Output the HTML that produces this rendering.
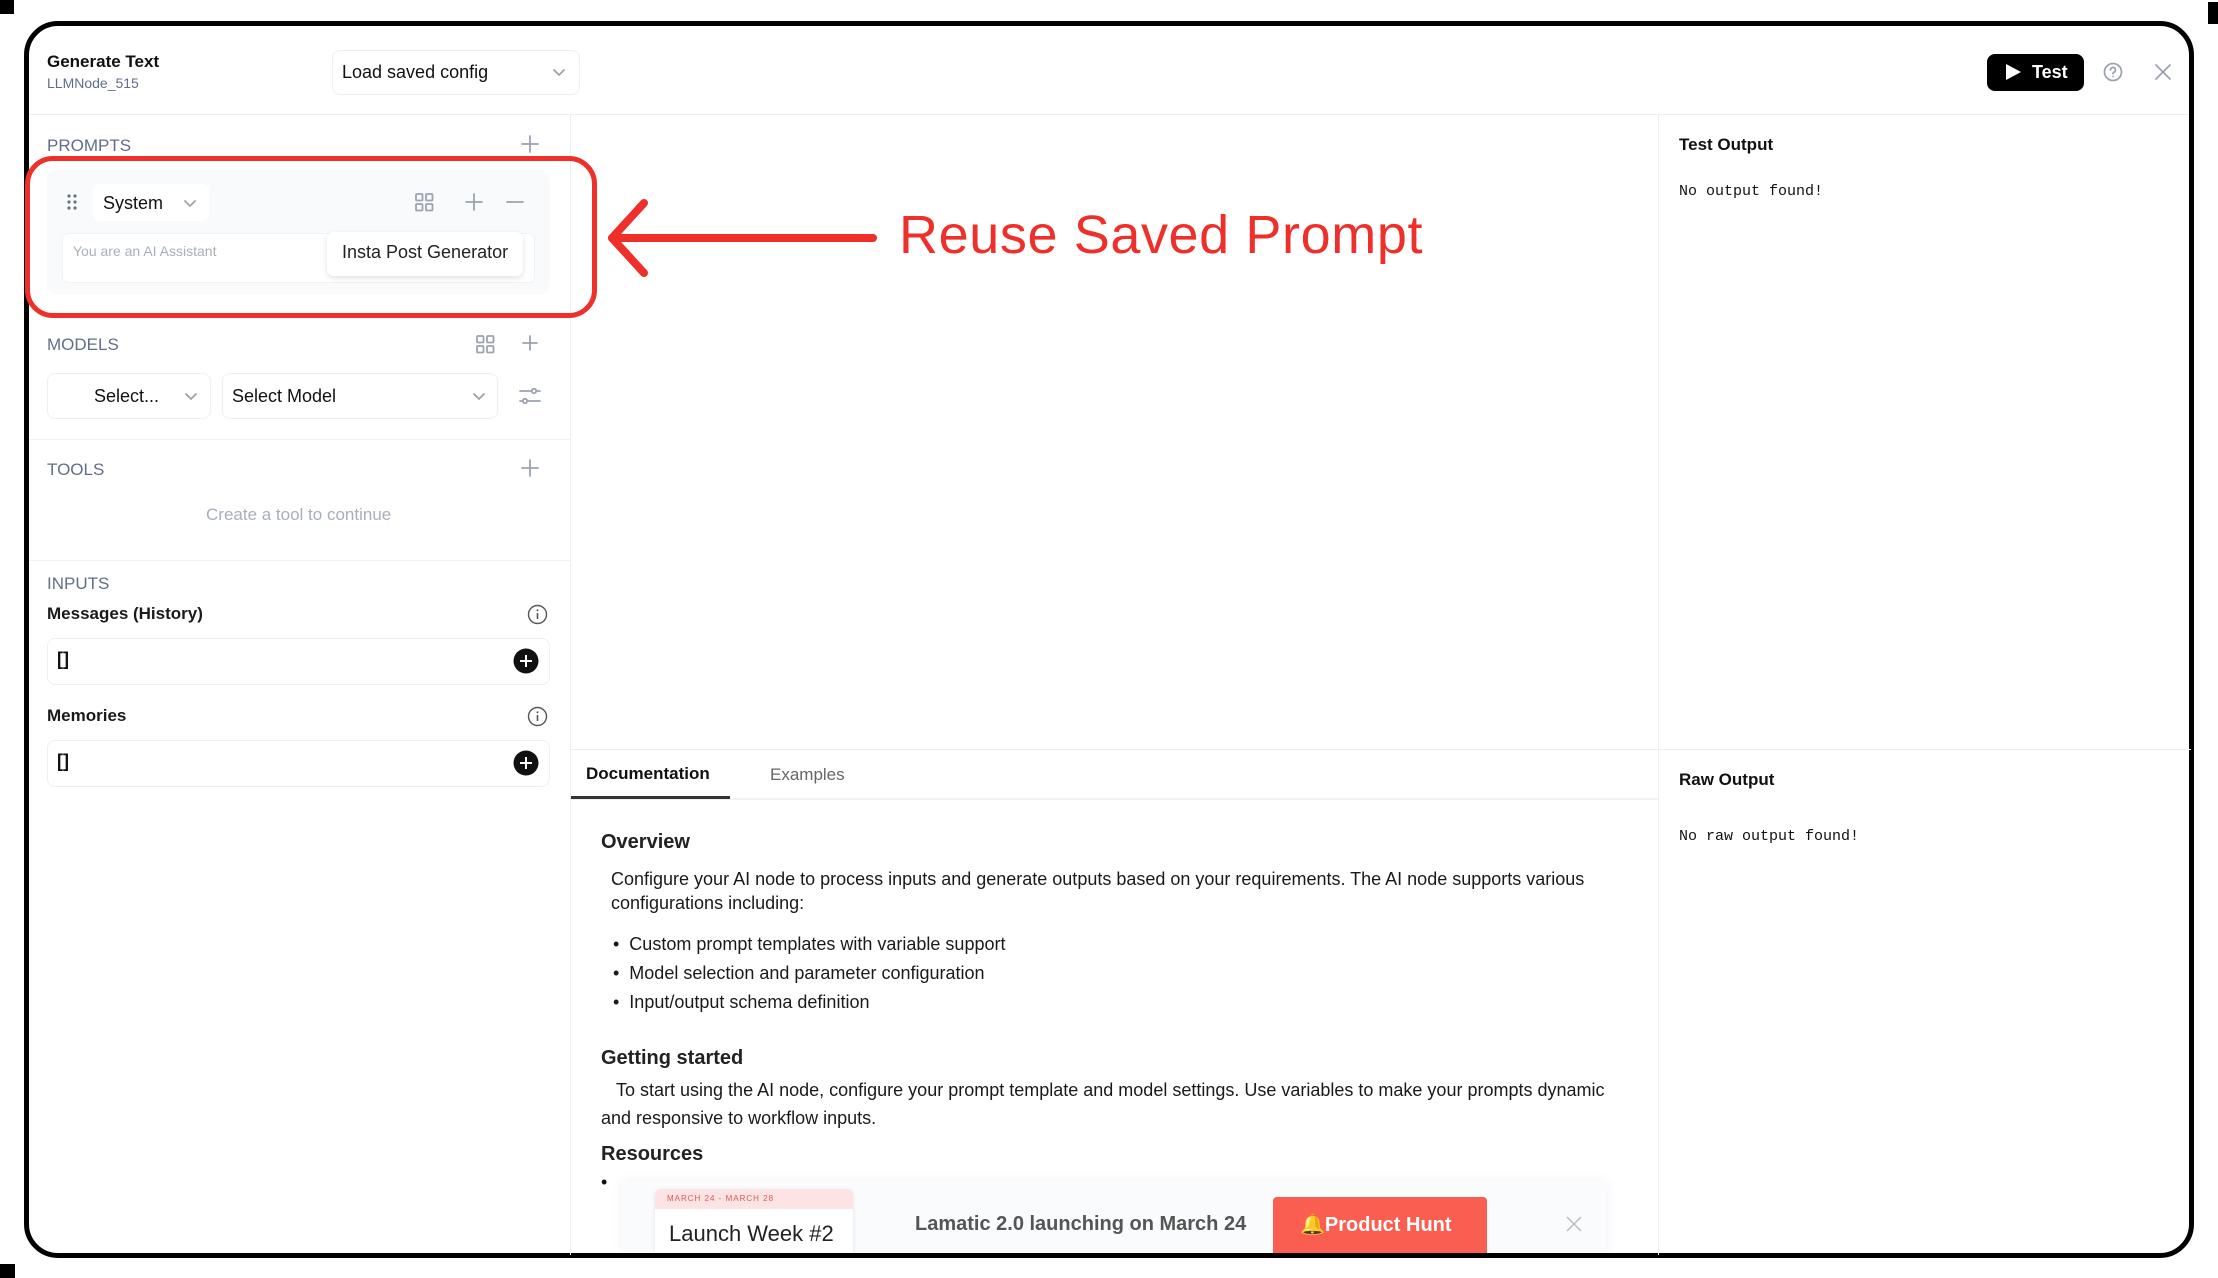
<!DOCTYPE html>
<html><head><meta charset="utf-8">
<style>
*{box-sizing:border-box;margin:0;padding:0}
body{width:2218px;height:1278px;background:#fff;position:relative;overflow:hidden;font-family:"Liberation Sans",sans-serif;color:#111}
.a{position:absolute}
.frame{left:24px;top:21px;width:2170px;height:1237px;border:5px solid #000;border-radius:34px;overflow:hidden;background:#fff}
.lbl{font-size:17px;color:#5f6f8a;font-weight:500}
.ic{stroke:#9ca3af;fill:none;stroke-width:1.8;stroke-linecap:round}
.box{border:1px solid #eef0f3;border-radius:8px;background:#fff}
.mono{font-family:"Liberation Mono",monospace;font-size:15px}
.doc{font-size:18px;color:#1a1a1a}
</style></head><body>
<div class="a" style="left:0;top:0;width:14px;height:14px;background:#000"></div>
<div class="a" style="left:0;top:1264px;width:15px;height:14px;background:#000"></div>
<div class="a" style="left:2208px;top:2px;width:10px;height:22px;background:#000"></div>
<div class="a frame"></div>

<!-- header -->
<div class="a" style="left:47px;top:52px;font-size:17px;font-weight:bold">Generate Text</div>
<div class="a" style="left:47px;top:75px;font-size:14px;color:#5f6f8a">LLMNode_515</div>
<div class="a box" style="left:332px;top:50px;width:248px;height:45px"></div>
<div class="a" style="left:342px;top:62px;font-size:18px">Load saved config</div>
<svg class="a" style="left:552px;top:65px" width="14" height="14"><path class="ic" d="M2 5l5 5 5-5"/></svg>
<div class="a" style="left:29px;top:114px;width:2160px;height:1px;background:#eef0f3"></div>
<div class="a" style="left:1987px;top:54px;width:97px;height:37px;background:#000;border-radius:8px"></div>
<svg class="a" style="left:2004px;top:63px" width="18" height="18"><path d="M2 1l15 8-15 8z" fill="#fff"/></svg>
<div class="a" style="left:2032px;top:62px;font-size:18px;color:#fff;font-weight:bold">Test</div>
<svg class="a" style="left:2103px;top:62px" width="20" height="20"><circle cx="10" cy="10" r="8.5" class="ic" stroke-width="1.5"/><path class="ic" stroke-width="1.5" d="M7.5 8a2.5 2.5 0 1 1 3.5 2.2c-.7.4-1 .8-1 1.6"/><circle cx="10" cy="14.5" r=".9" fill="#9ca3af"/></svg>
<svg class="a" style="left:2154px;top:63px" width="18" height="18"><path class="ic" d="M2 2l14 14M16 2L2 16"/></svg>

<!-- panel borders -->
<div class="a" style="left:570px;top:115px;width:1px;height:1140px;background:#eef0f3"></div>
<div class="a" style="left:1658px;top:115px;width:1px;height:1140px;background:#eef0f3"></div>
<div class="a" style="left:571px;top:749px;width:1620px;height:1px;background:#eef0f3"></div>

<!-- prompts -->
<div class="a lbl" style="left:47px;top:136px">PROMPTS</div>
<svg class="a" style="left:521px;top:135px" width="18" height="18"><path class="ic" d="M9 1v16M1 9h16"/></svg>
<div class="a" style="left:47px;top:170px;width:503px;height:124px;background:#f8fafc;border-radius:10px"></div>
<svg class="a" style="left:67px;top:194px" width="10" height="18"><g fill="#6b7280"><circle cx="2" cy="2" r="1.6"/><circle cx="8" cy="2" r="1.6"/><circle cx="2" cy="8" r="1.6"/><circle cx="8" cy="8" r="1.6"/><circle cx="2" cy="14" r="1.6"/><circle cx="8" cy="14" r="1.6"/></g></svg>
<div class="a" style="left:93px;top:184px;width:116px;height:37px;background:#fff;border-radius:7px"></div>
<div class="a" style="left:103px;top:193px;font-size:18px">System</div>
<svg class="a" style="left:183px;top:196px" width="14" height="14"><path class="ic" d="M2 5l5 5 5-5"/></svg>
<svg class="a" style="left:415px;top:193px" width="19" height="19"><g class="ic" stroke-width="1.5"><rect x="1" y="1" width="6.5" height="6.5" rx="1"/><rect x="11" y="1" width="6.5" height="6.5" rx="1"/><rect x="1" y="11" width="6.5" height="6.5" rx="1"/><rect x="11" y="11" width="6.5" height="6.5" rx="1"/></g></svg>
<svg class="a" style="left:465px;top:193px" width="18" height="18"><path class="ic" d="M9 1v16M1 9h16"/></svg>
<svg class="a" style="left:506px;top:193px" width="18" height="18"><path class="ic" d="M1 9h16"/></svg>
<div class="a" style="left:62px;top:233px;width:473px;height:50px;background:#fff;border:1px solid #f1f3f6;border-radius:6px"></div>
<div class="a" style="left:73px;top:243px;font-size:14px;color:#a8afba">You are an AI Assistant</div>
<div class="a" style="left:327px;top:232px;width:196px;height:44px;background:#fff;border-radius:7px;box-shadow:0 2px 6px rgba(0,0,0,.12)"></div>
<div class="a" style="left:342px;top:242px;font-size:18px;color:#222">Insta Post Generator</div>

<!-- red annotation -->
<div class="a" style="left:25px;top:156px;width:572px;height:162px;border:5px solid #ef2f2a;border-radius:28px"></div>
<svg class="a" style="left:600px;top:195px" width="280" height="90"><g stroke="#ef2f2a" stroke-width="8" stroke-linecap="round" fill="none"><path d="M12 43H273"/><path d="M44 8L12 43 44 78" stroke-linejoin="round"/></g></svg>
<div class="a" style="left:899px;top:204px;font-size:54px;color:#ef2f2a;letter-spacing:.6px">Reuse Saved Prompt</div>

<!-- models -->
<div class="a lbl" style="left:47px;top:335px">MODELS</div>
<svg class="a" style="left:476px;top:335px" width="19" height="19"><g class="ic" stroke-width="1.5"><rect x="1" y="1" width="6.5" height="6.5" rx="1"/><rect x="11" y="1" width="6.5" height="6.5" rx="1"/><rect x="1" y="11" width="6.5" height="6.5" rx="1"/><rect x="11" y="11" width="6.5" height="6.5" rx="1"/></g></svg>
<svg class="a" style="left:522px;top:335px" width="16" height="16"><path class="ic" d="M8 1v14M1 8h14"/></svg>
<div class="a box" style="left:47px;top:373px;width:164px;height:46px"></div>
<div class="a" style="left:94px;top:386px;font-size:18px">Select...</div>
<svg class="a" style="left:184px;top:389px" width="14" height="14"><path class="ic" d="M2 5l5 5 5-5"/></svg>
<div class="a box" style="left:222px;top:373px;width:276px;height:46px"></div>
<div class="a" style="left:232px;top:386px;font-size:18px">Select Model</div>
<svg class="a" style="left:472px;top:389px" width="14" height="14"><path class="ic" d="M2 5l5 5 5-5"/></svg>
<svg class="a" style="left:519px;top:386px" width="22" height="20"><g class="ic" stroke-width="1.4"><path d="M1 5h12M17 5h4M1 15h3M8 15h13"/><circle cx="15" cy="5" r="2.2"/><circle cx="6" cy="15" r="2.2"/></g></svg>
<div class="a" style="left:29px;top:439px;width:541px;height:1px;background:#eef0f3"></div>

<!-- tools -->
<div class="a lbl" style="left:47px;top:460px">TOOLS</div>
<svg class="a" style="left:521px;top:459px" width="18" height="18"><path class="ic" d="M9 1v16M1 9h16"/></svg>
<div class="a" style="left:206px;top:505px;font-size:17px;color:#a8afba">Create a tool to continue</div>
<div class="a" style="left:29px;top:560px;width:541px;height:1px;background:#eef0f3"></div>

<!-- inputs -->
<div class="a lbl" style="left:47px;top:574px">INPUTS</div>
<div class="a" style="left:47px;top:604px;font-size:17px;font-weight:bold;color:#1a1a1a">Messages (History)</div>
<svg class="a" style="left:527px;top:604px" width="21" height="21"><circle cx="10.5" cy="10.5" r="9" fill="none" stroke="#555" stroke-width="1.4"/><path d="M10.5 9v6" stroke="#555" stroke-width="1.6"/><circle cx="10.5" cy="6.3" r="1" fill="#555"/></svg>
<div class="a box" style="left:47px;top:638px;width:503px;height:47px"></div>
<div class="a" style="left:57px;top:649px;font-size:18px;font-weight:bold">[]</div>
<svg class="a" style="left:513px;top:648px" width="26" height="26"><circle cx="13" cy="13" r="12.5" fill="#111"/><path d="M13 7v12M7 13h12" stroke="#fff" stroke-width="2"/></svg>
<div class="a" style="left:47px;top:706px;font-size:17px;font-weight:bold;color:#1a1a1a">Memories</div>
<svg class="a" style="left:527px;top:706px" width="21" height="21"><circle cx="10.5" cy="10.5" r="9" fill="none" stroke="#555" stroke-width="1.4"/><path d="M10.5 9v6" stroke="#555" stroke-width="1.6"/><circle cx="10.5" cy="6.3" r="1" fill="#555"/></svg>
<div class="a box" style="left:47px;top:740px;width:503px;height:47px"></div>
<div class="a" style="left:57px;top:751px;font-size:18px;font-weight:bold">[]</div>
<svg class="a" style="left:513px;top:750px" width="26" height="26"><circle cx="13" cy="13" r="12.5" fill="#111"/><path d="M13 7v12M7 13h12" stroke="#fff" stroke-width="2"/></svg>

<!-- right panel -->
<div class="a" style="left:1679px;top:135px;font-size:17px;font-weight:bold">Test Output</div>
<div class="a mono" style="left:1679px;top:183px">No output found!</div>
<div class="a" style="left:1679px;top:770px;font-size:17px;font-weight:bold">Raw Output</div>
<div class="a mono" style="left:1679px;top:828px">No raw output found!</div>

<!-- tabs -->
<div class="a" style="left:586px;top:764px;font-size:17px;font-weight:bold">Documentation</div>
<div class="a" style="left:770px;top:765px;font-size:17px;color:#666">Examples</div>
<div class="a" style="left:571px;top:798px;width:1087px;height:2px;background:#f0f1f3"></div>
<div class="a" style="left:571px;top:796px;width:159px;height:3px;background:#333"></div>

<!-- docs -->
<div class="a" style="left:601px;top:831px;font-size:20px;font-weight:bold;color:#222">Overview</div>
<div class="a doc" style="left:611px;top:867px;width:1000px;line-height:24px">Configure your AI node to process inputs and generate outputs based on your requirements. The AI node supports various configurations including:</div>
<div class="a doc" style="left:613px;top:930px;line-height:29px">•&nbsp; Custom prompt templates with variable support<br>•&nbsp; Model selection and parameter configuration<br>•&nbsp; Input/output schema definition</div>
<div class="a" style="left:601px;top:1047px;font-size:20px;font-weight:bold;color:#222">Getting started</div>
<div class="a doc" style="left:601px;top:1076px;width:1015px;line-height:28px">&nbsp;&nbsp;&nbsp;To start using the AI node, configure your prompt template and model settings. Use variables to make your prompts dynamic and responsive to workflow inputs.</div>
<div class="a" style="left:601px;top:1143px;font-size:20px;font-weight:bold;color:#222">Resources</div>
<div class="a" style="left:601px;top:1172px;font-size:18px">•</div>

<!-- banner -->
<div class="a" style="left:622px;top:1181px;width:985px;height:72px;background:#fafbfc;box-shadow:0 0 12px rgba(0,0,0,.06)"></div>
<div class="a" style="left:655px;top:1189px;width:198px;height:64px;background:#fff;border-radius:6px 6px 0 0;box-shadow:0 1px 4px rgba(0,0,0,.1);overflow:hidden">
 <div style="height:20px;background:#fde3e3;font-size:8px;color:#e0575a;letter-spacing:1px;padding:5px 12px">MARCH 24 - MARCH 28</div>
</div>
<div class="a" style="left:669px;top:1221px;font-size:22px;color:#222">Launch Week #2</div>
<div class="a" style="left:915px;top:1213px;font-size:20px;color:#555;font-weight:bold">Lamatic 2.0 launching on March 24</div>
<div class="a" style="left:1273px;top:1197px;width:214px;height:56px;background:#f95e51;border-radius:4px 4px 0 0"></div>
<div class="a" style="left:1300px;top:1212px;font-size:20px;color:#fff;font-weight:bold">🔔Product Hunt</div>
<svg class="a" style="left:1566px;top:1216px" width="16" height="16"><path d="M1 1l14 14M15 1L1 15" stroke="#bbb" stroke-width="1.5"/></svg>
</body></html>
